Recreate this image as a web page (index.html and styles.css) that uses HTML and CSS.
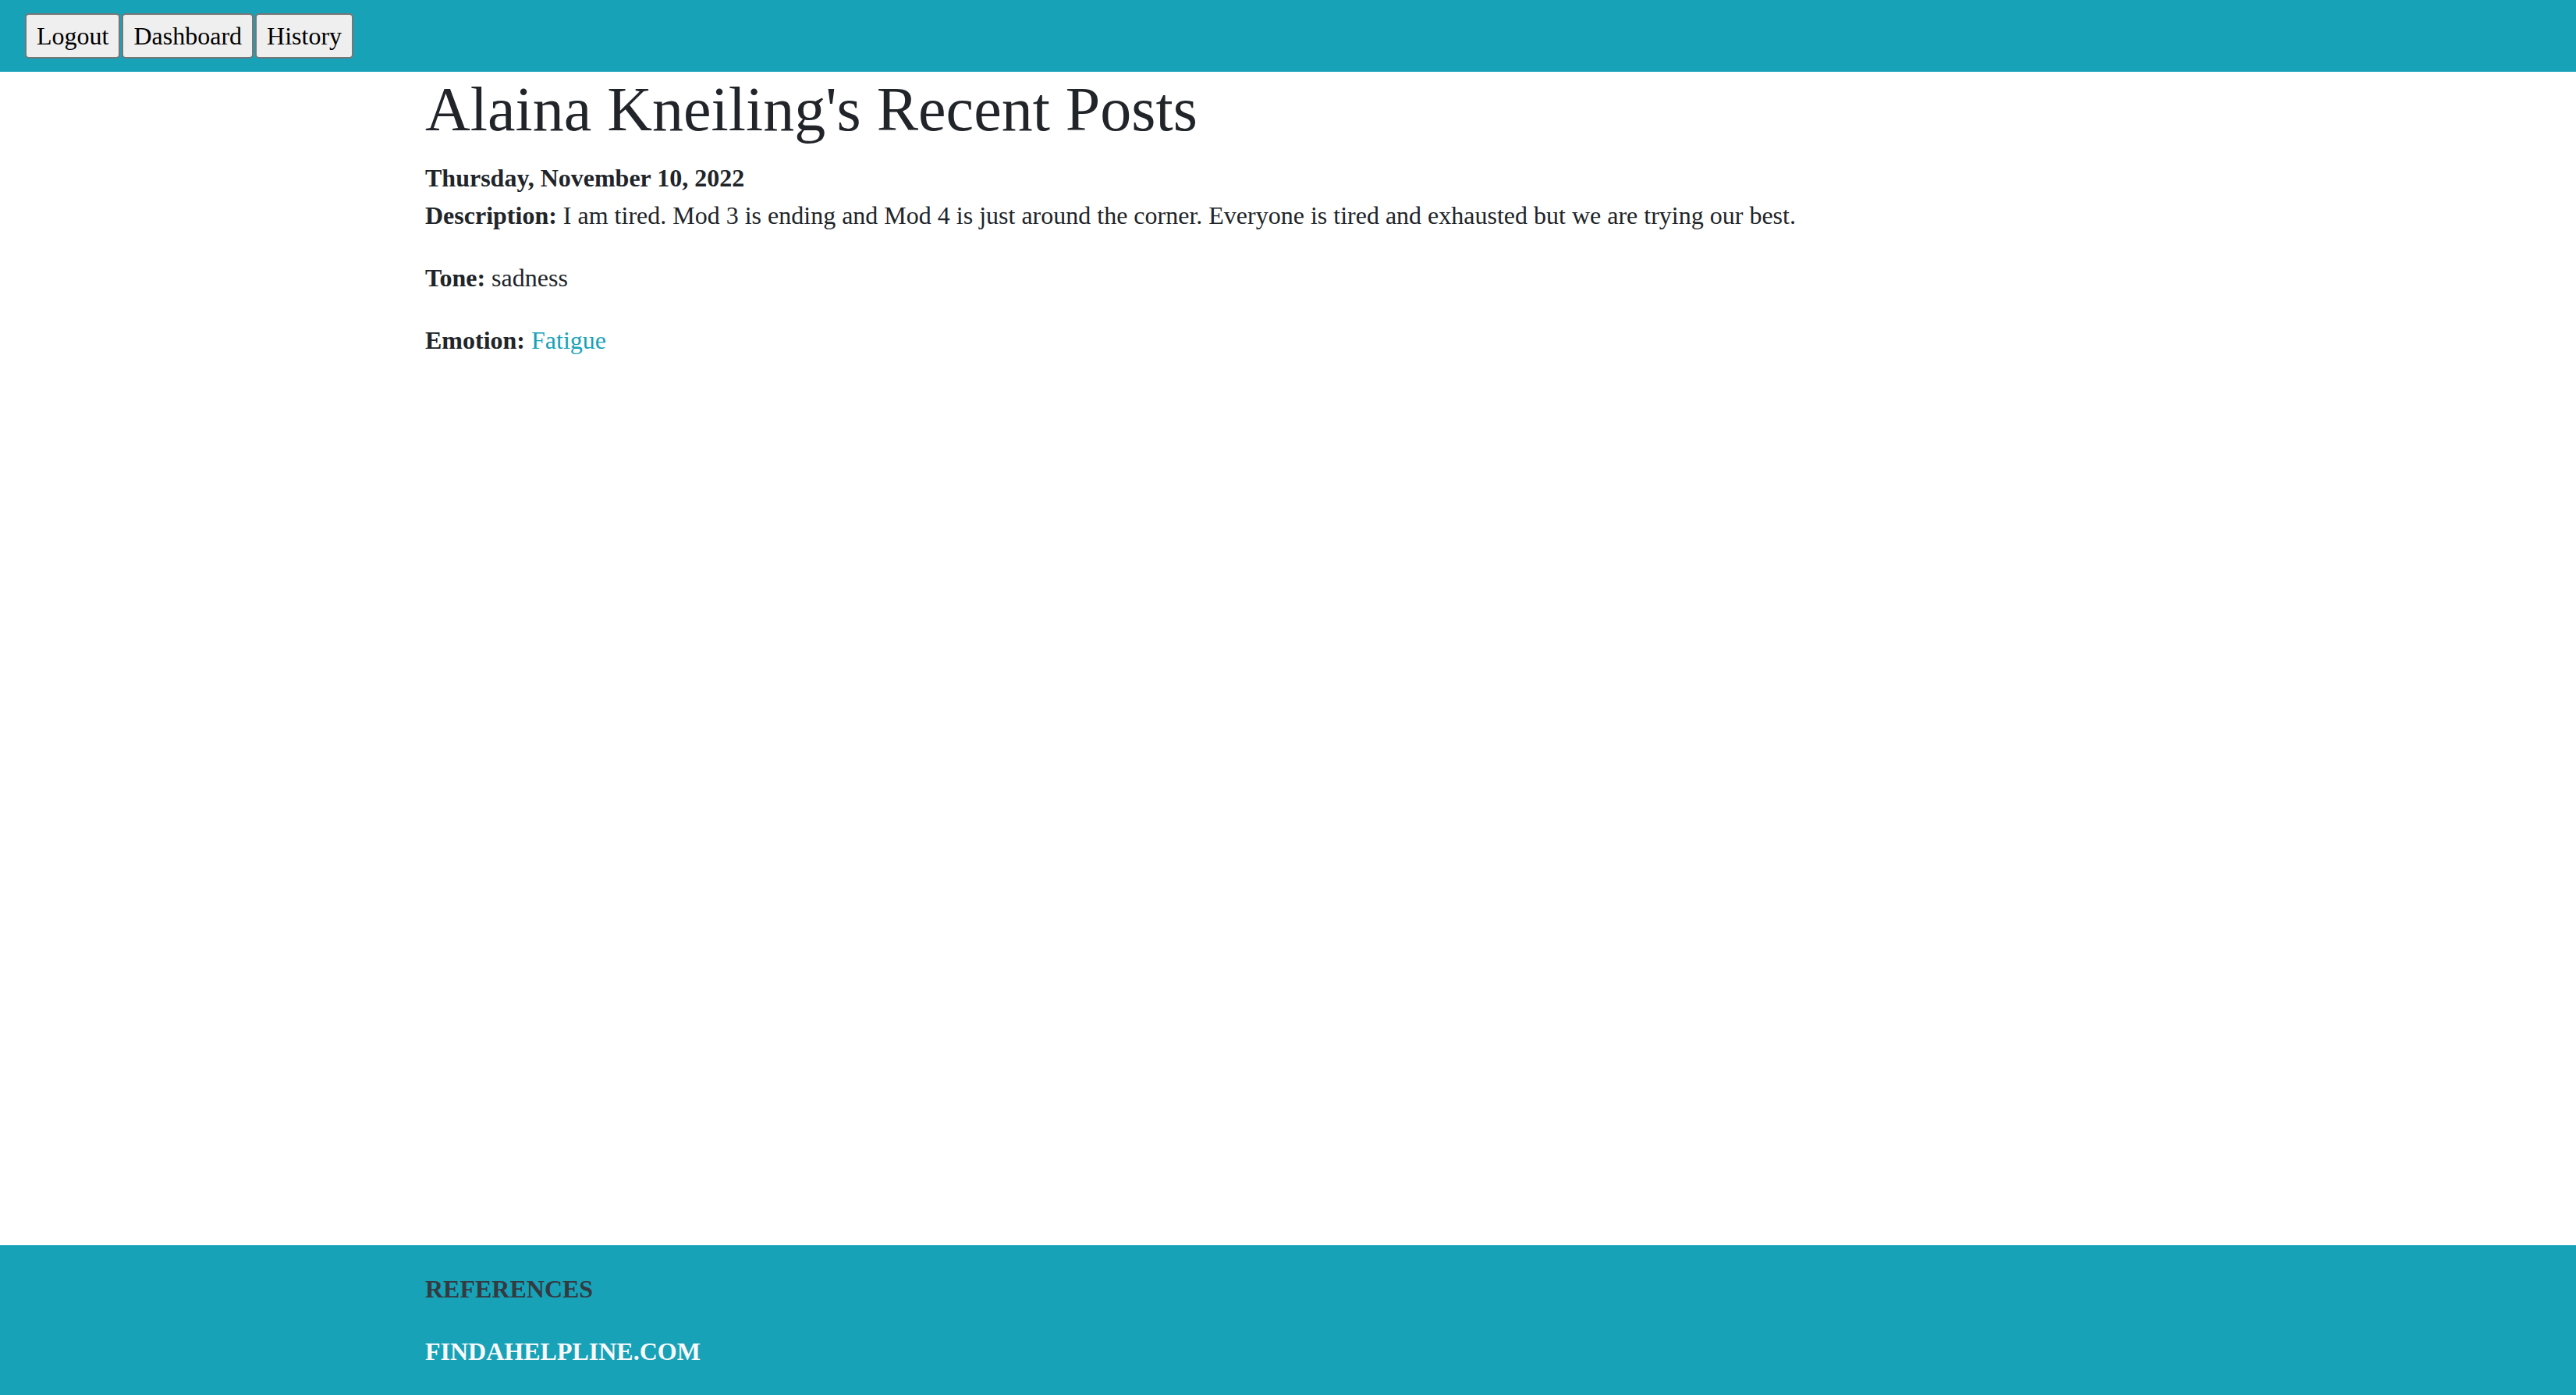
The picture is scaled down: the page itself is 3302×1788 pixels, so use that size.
FILE: index.html
```html
<!DOCTYPE html>
<html lang="en">
<head>
<meta charset="utf-8">
<title>Recent Posts</title>
<link rel="stylesheet" href="styles.css">
</head>
<body>
<div class="page">
  <header class="topbar">
    <button class="nav-btn" type="button">Logout</button>
    <button class="nav-btn" type="button">Dashboard</button>
    <button class="nav-btn" type="button">History</button>
  </header>
  <main class="container main">
    <h1 class="title">Alaina Kneiling's Recent Posts</h1>
    <div class="post">
      <div class="post-date">Thursday, November 10, 2022</div>
      <p class="field"><strong>Description:</strong> I am tired. Mod 3 is ending and Mod 4 is just around the corner. Everyone is tired and exhausted but we are trying our best.</p>
      <p class="field"><strong>Tone:</strong> sadness</p>
      <p class="field"><strong>Emotion:</strong> <a class="emotion" href="#">Fatigue</a></p>
    </div>
  </main>
  <footer class="footer">
    <div class="container">
      <p class="footer-head">REFERENCES</p>
      <p class="footer-link"><a href="#">FINDAHELPLINE.COM</a></p>
    </div>
  </footer>
</div>
</body>
</html>
```
FILE: styles.css
```css
* { box-sizing: border-box; }
html, body { margin: 0; padding: 0; }
body {
  font-family: "Liberation Serif", "Times New Roman", serif;
  font-size: 32px;
  line-height: 1.5;
  color: #212529;
  background: #fff;
}
.page {
  display: flex;
  flex-direction: column;
  min-height: 100vh;
}
.topbar {
  background: #17a2b8;
  display: flex;
  align-items: center;
  gap: 2px;
  padding: 17px 32px;
  height: 92px;
}
.nav-btn {
  font-family: inherit;
  font-size: 32px;
  line-height: 48px;
  color: #000;
  background: #efefef;
  border: 2px solid #767676;
  border-radius: 5px;
  padding: 2px 13px;
  height: 58px;
  margin: 0;
}
.container {
  width: 2280px;
  margin: 0 auto;
  padding: 0 34px;
}
.main { flex: 1; }
.title {
  font-size: 80px;
  font-weight: 500;
  line-height: 1.2;
  margin: 0 0 16px;
}
.post-date { font-weight: bold; }
.field { margin: 0 0 32px; }
.field strong { font-weight: bold; }
.emotion { color: #17a2b8; text-decoration: none; }
.footer {
  background: #17a2b8;
  height: 192px;
  padding-top: 32px;
  font-weight: bold;
}
.footer p { margin: 0 0 32px; }
.footer-head { color: #343a40; }
.footer-link a { color: #f8f9fa; text-decoration: none; }
```
